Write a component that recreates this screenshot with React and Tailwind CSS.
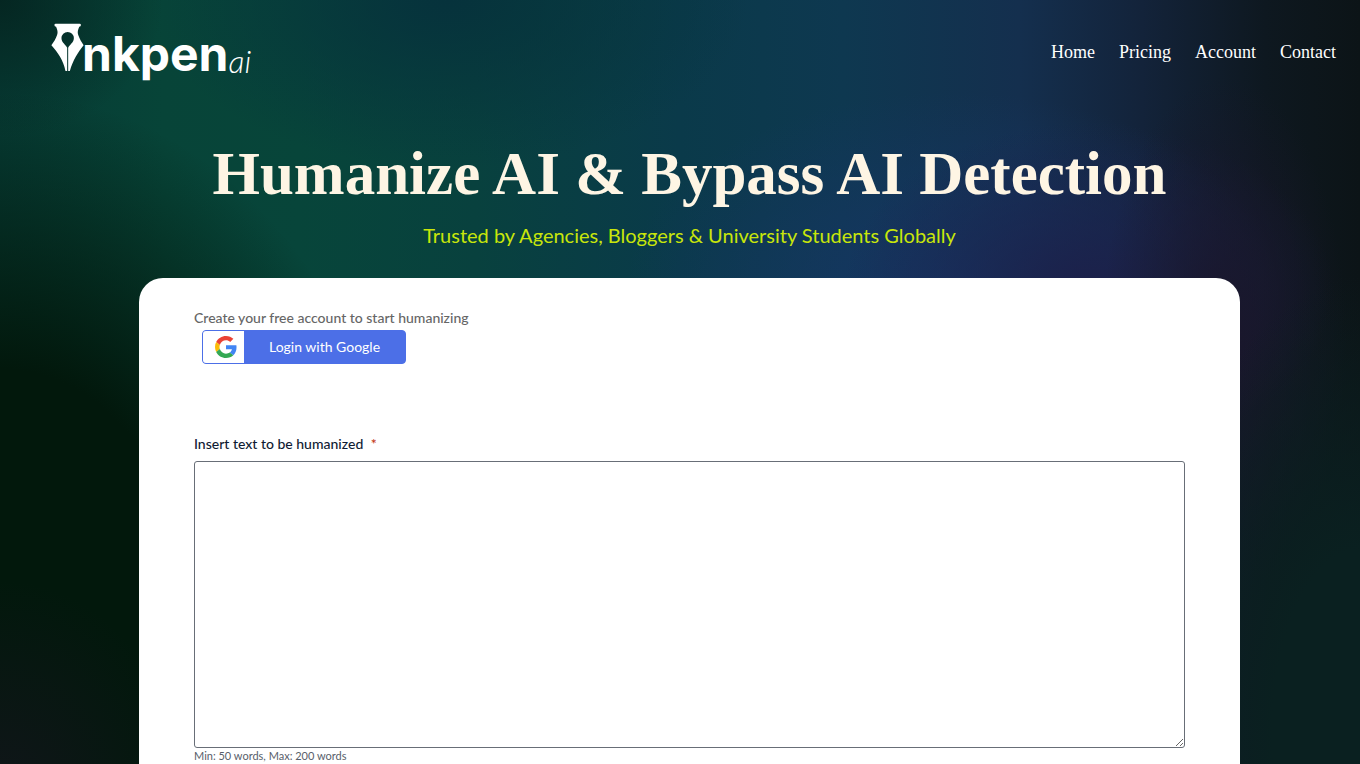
const NAV_LINKS = [
    { label: "Home", href: "#home" },
    { label: "Pricing", href: "#pricing" },
    { label: "Account", href: "#account" },
    { label: "Contact", href: "#contact" },
];

function NibIcon() {
    return (
        <svg viewBox="34 40 98 146" className="h-[49px] w-[33px] shrink-0" fill="#fff" aria-hidden="true">
            <path
                fillRule="evenodd"
                d="M48 42H119Q123 42 123 46Q123 51 118 51C114 60 112 67 115 76C119 88 125 97 131 106C114 128 99 150 90 183H85V114C88 106 102 99 102 85A18.500 18.500 0 0 0 65 85C65 99 79 106 82 114V183H77C71 150 54 128 35 106C42 97 48 88 52 76C55 67 53 60 49 51Q44 51 44 46Q44 42 48 42Z"
            />
        </svg>
    );
}

function GoogleIcon() {
    return (
        <svg viewBox="0 0 48 48" className="size-[22px]" aria-hidden="true">
            <path fill="#EA4335" d="M24 9.5c3.54 0 6.71 1.22 9.21 3.6l6.85-6.85C35.9 2.38 30.47 0 24 0 14.62 0 6.51 5.38 2.56 13.22l7.98 6.19C12.43 13.72 17.74 9.5 24 9.5z" />
            <path fill="#4285F4" d="M46.98 24.55c0-1.57-.15-3.09-.38-4.55H24v9.02h12.94c-.58 2.96-2.26 5.48-4.78 7.18l7.73 6c4.51-4.18 7.09-10.36 7.09-17.65z" />
            <path fill="#FBBC05" d="M10.53 28.59c-.48-1.45-.76-2.99-.76-4.59s.27-3.14.76-4.59l-7.98-6.19C.92 16.46 0 20.12 0 24c0 3.88.92 7.54 2.56 10.78l7.97-6.19z" />
            <path fill="#34A853" d="M24 48c6.48 0 11.93-2.13 15.89-5.81l-7.73-6c-2.15 1.45-4.92 2.3-8.16 2.3-6.26 0-11.57-4.22-13.47-9.91l-7.98 6.19C6.51 42.62 14.62 48 24 48z" />
        </svg>
    );
}

function Header() {
    return (
        <header className="flex h-[104px] items-center justify-between pl-[51px] pr-6">
            <a href="#home" aria-label="Inkpen ai" className="flex items-start pt-1 text-white">
                <NibIcon />
                <span className="-ml-0.5 font-['Inter',sans-serif] text-[48px] leading-[62px] font-bold">nkpen</span>
                <span className="pt-5 font-['Lato',sans-serif] text-[32px] leading-9 font-light italic">ai</span>
            </a>

            <nav className="flex gap-6 font-['Liberation_Serif',serif] text-lg text-white">
                {NAV_LINKS.map((link) => (
                    <a key={link.href} href={link.href} className="hover:underline">
                        {link.label}
                    </a>
                ))}
            </nav>
        </header>
    );
}

function HumanizeForm() {
    return (
        <form
            className="mt-7 rounded-t-3xl bg-white px-[55px] pt-7 pb-4 text-sm"
            onSubmit={(e) => e.preventDefault()}
        >
            <p className="leading-6 font-medium text-[#666]">Create your free account to start humanizing</p>
            <button
                type="button"
                className="ml-2 flex h-[34px] w-[204px] items-stretch overflow-hidden rounded border border-[#4c6fe7] bg-[#4c6fe7] text-white"
            >
                <span className="flex w-[41px] items-center justify-center bg-white pl-1">
                    <GoogleIcon />
                </span>
                <span className="flex flex-1 items-center justify-center">Login with Google</span>
            </button>

            <label htmlFor="source-text" className="mt-[70px] block leading-5 font-medium text-[#0f1b33]">
                Insert text to be humanized <span className="ml-1 text-[#c02b0a]">*</span>
            </label>
            <textarea
                id="source-text"
                required
                className="mt-[7px] block h-[287px] w-full resize rounded-[3px] border border-[#686e77] bg-white p-2 outline-none"
            />
            <p className="text-[11px] leading-4 text-[#585e6a]">Min: 50 words, Max: 200 words</p>
        </form>
    );
}

export default function App() {
    return (
        <div className="min-h-screen bg-[#03170f] bg-[radial-gradient(ellipse_14%_30%_at_0%_106%,#11151a_0%,#11151a00_100%),radial-gradient(ellipse_30%_66%_at_0%_78%,#02180c_0%,#02180c_45%,#02180c00_100%),radial-gradient(ellipse_12%_18%_at_0%_0%,#04211dcc_0%,#04211d00_100%),radial-gradient(ellipse_22%_22%_at_33%_0%,#06323c_0%,#06323c00_100%),radial-gradient(ellipse_16%_60%_at_100%_96%,#0a2020_0%,#0a2020_40%,#0a202000_100%),radial-gradient(ellipse_9%_34%_at_90%_44%,#1a162b_0%,#1a162b00_100%),radial-gradient(ellipse_18%_22%_at_80%_38%,#1c204a_0%,#1c204a00_100%),radial-gradient(ellipse_24%_26%_at_70%_38%,#163664_0%,#16366400_100%),linear-gradient(90deg,#063b34_0%,#074438_12%,#07453a_22%,#08413e_35%,#0a3a4a_50%,#0e3850_62%,#142f4e_75%,#13233a_84%,#0e1820_93%,#0c1417_100%)] bg-fixed font-['Lato',sans-serif]">
            <Header />
            <main className="pr-[120px] pl-[139px]">
                <h1 className="pt-8 text-center font-['Liberation_Serif',serif] text-[61px] leading-[75px] font-bold text-[#fef5e4]">
                    Humanize AI &amp; Bypass AI Detection
                </h1>
                <p className="mt-[9px] text-center text-xl leading-[30px] text-[#c8e60a]">
                    Trusted by Agencies, Bloggers &amp; University Students Globally
                </p>
                <HumanizeForm />
            </main>
        </div>
    );
}
